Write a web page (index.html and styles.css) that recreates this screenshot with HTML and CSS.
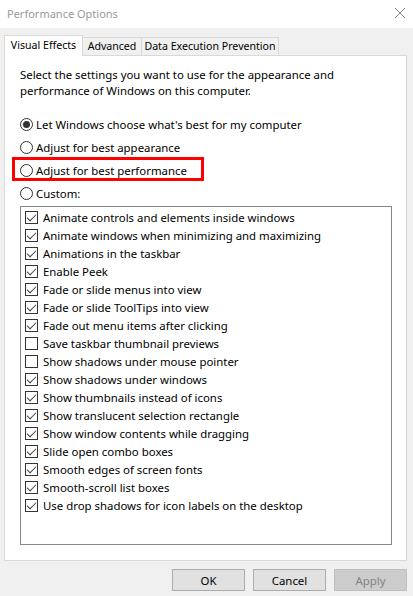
FILE: index.html
```html
<!DOCTYPE html>
<html>
<head>
<meta charset="utf-8">
<link rel="stylesheet" href="styles.css">
</head>
<body>
<div class="titlebar">
  <span class="title">Performance Options</span>
  <svg class="close" width="12" height="12" viewBox="0 0 12 12"><path d="M1 1 L11 11 M11 1 L1 11" stroke="#8c8686" stroke-width="1" fill="none"/></svg>
</div>
<div class="dialog">
  <div class="tabs">
    <div class="tab active">Visual Effects</div>
    <div class="tab t2">Advanced</div>
    <div class="tab t3">Data Execution Prevention</div>
  </div>
  <div class="panel">
    <p class="desc">Select the settings you want to use for the appearance and<br>performance of Windows on this computer.</p>
    <div class="radios">
      <div class="radio-row"><span class="radio on"></span><span>Let Windows choose what's best for my computer</span></div>
      <div class="radio-row"><span class="radio"></span><span>Adjust for best appearance</span></div>
      <div class="radio-row"><span class="radio"></span><span>Adjust for best performance</span><span class="highlight"></span></div>
      <div class="radio-row"><span class="radio"></span><span>Custom:</span></div>
    </div>
    <div class="listbox">
      <div class="item"><span class="cb on"></span>Animate controls and elements inside windows</div>
      <div class="item"><span class="cb on"></span>Animate windows when minimizing and maximizing</div>
      <div class="item"><span class="cb on"></span>Animations in the taskbar</div>
      <div class="item"><span class="cb on"></span>Enable Peek</div>
      <div class="item"><span class="cb on"></span>Fade or slide menus into view</div>
      <div class="item"><span class="cb on"></span>Fade or slide ToolTips into view</div>
      <div class="item"><span class="cb on"></span>Fade out menu items after clicking</div>
      <div class="item"><span class="cb"></span>Save taskbar thumbnail previews</div>
      <div class="item"><span class="cb"></span>Show shadows under mouse pointer</div>
      <div class="item"><span class="cb on"></span>Show shadows under windows</div>
      <div class="item"><span class="cb on"></span>Show thumbnails instead of icons</div>
      <div class="item"><span class="cb on"></span>Show translucent selection rectangle</div>
      <div class="item"><span class="cb on"></span>Show window contents while dragging</div>
      <div class="item"><span class="cb on"></span>Slide open combo boxes</div>
      <div class="item"><span class="cb on"></span>Smooth edges of screen fonts</div>
      <div class="item"><span class="cb on"></span>Smooth-scroll list boxes</div>
      <div class="item"><span class="cb on"></span>Use drop shadows for icon labels on the desktop</div>
    </div>
  </div>
  <div class="buttons">
    <button class="btn">OK</button>
    <button class="btn">Cancel</button>
    <button class="btn disabled">Apply</button>
  </div>
</div>
</body>
</html>
```
FILE: styles.css
```css
* { box-sizing: border-box; }
html, body { margin: 0; padding: 0; }
body {
  width: 413px;
  height: 596px;
  background: #f0f0f0;
  font-family: "Noto Sans", "Open Sans", sans-serif;
  font-size: 11.4px;
  color: #000;
  overflow: hidden;
}
.titlebar {
  height: 28px;
  background: #fff;
  display: flex;
  align-items: center;
  justify-content: space-between;
  padding: 0 7px 2px 7px;
}
.title { color: #9a9a9a; font-size: 11px; }
.dialog { padding: 7px 6px 0 4px; }
.tabs {
  display: flex;
  align-items: flex-end;
  height: 20px;
  position: relative;
  z-index: 1;
  font-size: 10.6px;
}
.tab {
  height: 18px;
  border: 1px solid #d9d9d9;
  border-bottom: none;
  background: #f0f0f0;
  line-height: 17px;
  padding: 0;
  text-align: center;
  white-space: nowrap;
}
.tab.active {
  height: 21px;
  background: #fff;
  width: 79px;
  line-height: 18px;
  margin-bottom: -1px;
}
.tab.t2 { width: 59px; border-left: none; }
.tab.t3 { width: 137px; border-left: none; }
.panel {
  height: 506px;
  background: #fff;
  border: 1px solid #d9d9d9;
  padding: 11px 14px 0 15px;
}
.desc {
  margin: 0;
  line-height: 16px;
}
.radios { margin-top: 14px; }
.radio-row {
  height: 23px;
  display: flex;
  align-items: center;
  gap: 3px;
  position: relative;
}
.radio {
  width: 13px;
  height: 13px;
  border: 1px solid #333;
  border-radius: 50%;
  background: #fff;
  display: flex;
  align-items: center;
  justify-content: center;
  flex: none;
}
.radio.on::after {
  content: "";
  width: 7px;
  height: 7px;
  border-radius: 50%;
  background: #333;
}
.highlight {
  position: absolute;
  left: -8px;
  top: -2px;
  width: 192px;
  height: 24px;
  border: 3px solid #ff0000;
}
.listbox {
  margin-top: 1px;
  height: 339px;
  border: 1px solid #828790;
  background: #fff;
  padding: 1px 4px;
}
.item {
  height: 18px;
  display: flex;
  align-items: center;
  gap: 5px;
  white-space: nowrap;
}
.cb {
  width: 13px;
  height: 13px;
  border: 1px solid #333;
  background: #fff;
  flex: none;
  position: relative;
}
.cb.on::after {
  content: "";
  position: absolute;
  left: 3px;
  top: 0px;
  width: 4px;
  height: 8px;
  border-right: 1px solid #444;
  border-bottom: 1px solid #444;
  transform: rotate(45deg);
}
.buttons {
  display: flex;
  justify-content: flex-end;
  gap: 8px;
  margin-top: 8px;
}
.btn {
  width: 73px;
  height: 22px;
  border: 1px solid #adadad;
  background: #e1e1e1;
  font-family: inherit;
  font-size: 11.4px;
  color: #000;
  padding: 0;
  margin: 0;
}
.btn.disabled {
  background: #cccccc;
  border-color: #bfbfbf;
  color: #838383;
}
```
